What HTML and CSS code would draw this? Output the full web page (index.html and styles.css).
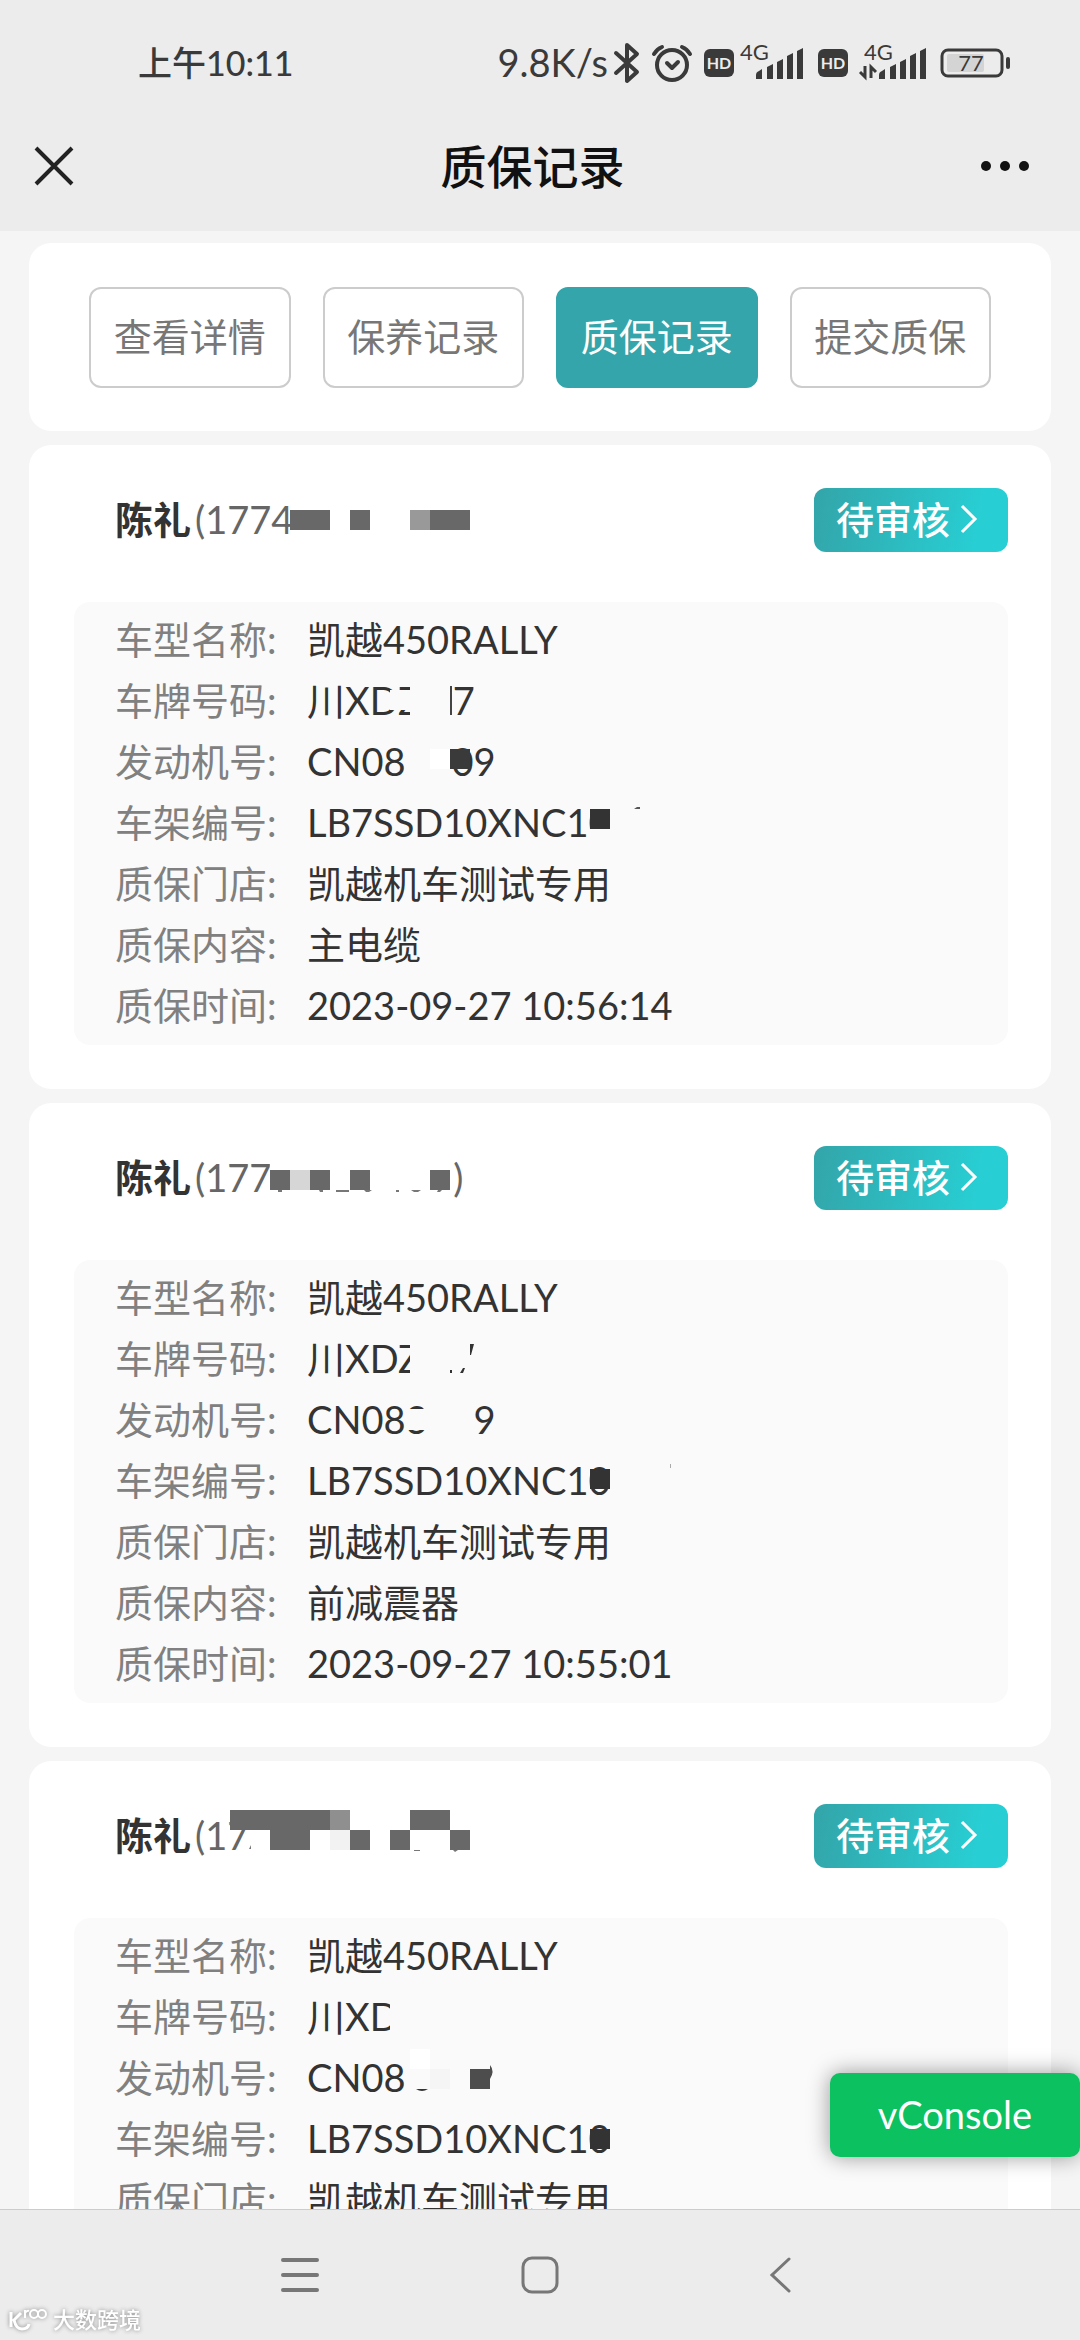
FILE: index.html
```html
<!DOCTYPE html>
<html lang="zh-CN">
<head>
<meta charset="utf-8">
<meta name="viewport" content="width=device-width">
<title>质保记录</title>
<link rel="stylesheet" href="styles.css">
</head>
<body>
<svg class="defs" aria-hidden="true">
  <symbol id="bars" viewBox="0 0 48 31"><path d="M0 31v-4q0-3 3-4l3-2v10zM11 31V19l6-3v15zM21 31V14l6-3v20zM31 31V8l6-3v26zM41 31V3l6-3v31z" fill="#3a3a3a"/></symbol>
  <symbol id="chevron" viewBox="0 0 18 30"><path d="M2 2l13 13L2 28" fill="none" stroke="#fff" stroke-width="3"/></symbol>
</svg>
<header class="top">
  <div class="status">
    <span class="clock">上午10:11</span>
    <span class="speed">9.8K/s</span>
    <div class="icons">
      <svg width="26" height="40" viewBox="0 0 26 40"><path d="M2 10l21 19-10 9V2l10 9L2 30" fill="none" stroke="#3a3a3a" stroke-width="4" stroke-linejoin="round" stroke-linecap="round"/></svg>
      <svg width="40" height="38" viewBox="0 0 40 38"><g fill="none" stroke="#3a3a3a" stroke-width="4" stroke-linecap="round" stroke-linejoin="round"><circle cx="20" cy="21" r="15"/><path d="M2 10q3-5 8-7M38 10q-3-5-8-7M15 19l5 5 6-6"/></g></svg>
      <span class="hd">HD</span>
      <svg class="signal" width="66" height="36" viewBox="0 0 66 36"><text x="0" y="15" font-size="22" fill="#3a3a3a">4G</text><use href="#bars" x="16" y="3" width="48" height="31"/></svg>
      <span class="hd">HD</span>
      <svg width="68" height="36" viewBox="0 0 68 36"><text x="4" y="15" font-size="22" fill="#3a3a3a">4G</text><path d="M5 21v11l-5-5M11 33V22l5 5" fill="none" stroke="#3a3a3a" stroke-width="3"/><use href="#bars" x="19" y="3" width="48" height="31"/></svg>
      <svg width="70" height="30" viewBox="0 0 70 30"><rect x="7" y="6" width="37" height="18" rx="2" fill="#d4d4d4"/><rect x="2" y="2" width="60" height="26" rx="6" fill="none" stroke="#3a3a3a" stroke-width="3"/><path d="M68 11v8" stroke="#3a3a3a" stroke-width="4" stroke-linecap="round"/><text x="31" y="23" text-anchor="middle" font-size="22" fill="#3a3a3a">77</text></svg>
    </div>
  </div>
  <div class="titlebar">
    <button class="icon-btn" aria-label="关闭"><svg width="38" height="38" viewBox="0 0 38 38"><path d="M1 1l36 36M37 1L1 37" stroke="#222" stroke-width="4"/></svg></button>
    <h1>质保记录</h1>
    <button class="icon-btn" aria-label="更多"><svg width="50" height="12" viewBox="0 0 50 12"><g fill="#111"><circle cx="6" cy="6" r="5"/><circle cx="25" cy="6" r="5"/><circle cx="44" cy="6" r="5"/></g></svg></button>
  </div>
</header>
<main>
  <div class="tabs">
    <button>查看详情</button>
    <button>保养记录</button>
    <button class="active">质保记录</button>
    <button>提交质保</button>
  </div>

  <article class="card">
    <div class="head">
      <div class="who"><b>陈礼</b><span>(17749</span>
        <svg class="mask" width="400" height="64"><path d="M175 0h225v64H175z" fill="#fff"/><path d="M175 22h40v20h-40zM235 22h20v20h-20zM315 22h40v20h-40z" fill="#686868"/><path d="M295 22h20v20h-20z" fill="#999"/></svg>
      </div>
      <button class="state">待审核<svg width="18" height="30"><use href="#chevron"/></svg></button>
    </div>
    <dl>
      <dt>车型名称:</dt><dd>凯越450RALLY</dd>
      <dt>车牌号码:</dt><dd>川XDZ<i class="gap short"></i>7
        <svg class="mask" width="400" height="61"><path d="M83 20h20v20H83zM103 0h40v61h-40z" fill="#fafafa"/><path d="M143 16h2v29h-2z" fill="#444"/></svg></dd>
      <dt>发动机号:</dt><dd>CN08<i class="gap"></i>09
        <svg class="mask" width="400" height="61"><path d="M123 18h20v20h-20z" fill="#fff"/><path d="M143 18h20v20h-20z" fill="#3a3a3a"/></svg></dd>
      <dt>车架编号:</dt><dd>LB7SSD10XNC10
        <svg class="mask" width="400" height="61"><path d="M283 0h40v61h-40z" fill="#fafafa"/><path d="M283 17h20v20h-20z" fill="#333"/><path d="M327 17l3-2h3v2z" fill="#555"/></svg></dd>
      <dt>质保门店:</dt><dd>凯越机车测试专用</dd>
      <dt>质保内容:</dt><dd>主电缆</dd>
      <dt>质保时间:</dt><dd>2023-09-27 10:56:14</dd>
    </dl>
  </article>

  <article class="card">
    <div class="head">
      <div class="who"><b>陈礼</b><span>(1774<i class="gap long"></i>)</span>
        <svg class="mask" width="400" height="64"><path d="M155 0h180v64H155z" fill="#fff"/><path d="M155 24h20v20h-20zM195 24h20v20h-20zM235 24h20v20h-20zM315 24h20v20h-20z" fill="#686868"/><path d="M175 24h20v20h-20z" fill="#d6d6d6"/><path d="M163 44h4v2h-4zM204 44h4v2h-3zM221 44h13v2h-13zM249 44h8l-3 2h-3zM281 44h3v2h-3zM296 44h10l-3 2h-4zM323 44h4l-2 2h-3z" fill="#777"/></svg>
      </div>
      <button class="state">待审核<svg width="18" height="30"><use href="#chevron"/></svg></button>
    </div>
    <dl>
      <dt>车型名称:</dt><dd>凯越450RALLY</dd>
      <dt>车牌号码:</dt><dd>川XDZ
        <svg class="mask" width="400" height="61"><path d="M103 0h40v61h-40z" fill="#fafafa"/><path d="M143 42h2v3h-2zM153 45l3-5h2l-2 5zM163 16h4l-3 11h-1z" fill="#333"/></svg></dd>
      <dt>发动机号:</dt><dd>CN083<i class="gap"></i>9
        <svg class="mask" width="400" height="61"><path d="M98 20h26v21H98zM123 0h20v61h-20z" fill="#fafafa"/></svg></dd>
      <dt>车架编号:</dt><dd>LB7SSD10XNC10
        <svg class="mask" width="400" height="61"><path d="M303 0h20v61h-20z" fill="#fafafa"/><path d="M283 19h20v20h-20z" fill="#333"/><path d="M363 14h1v4h-1z" fill="#aaa"/></svg></dd>
      <dt>质保门店:</dt><dd>凯越机车测试专用</dd>
      <dt>质保内容:</dt><dd>前减震器</dd>
      <dt>质保时间:</dt><dd>2023-09-27 10:55:01</dd>
    </dl>
  </article>

  <article class="card">
    <div class="head">
      <div class="who"><b>陈礼</b><span>(17</span>
        <svg class="mask" width="400" height="64"><path d="M115 6h100v20H115zM295 6h40v20h-40zM155 26h40v20h-40zM235 26h20v20h-20zM275 26h20v20h-20zM335 26h20v20h-20z" fill="#686868"/><path d="M215 6h20v20h-20z" fill="#8f8f8f"/><path d="M215 26h20v20h-20z" fill="#f2f2f2"/><path d="M134 45l2-4v4zM299 46h6v1h-6zM338 46h5l-3 2z" fill="#777"/></svg>
      </div>
      <button class="state">待审核<svg width="18" height="30"><use href="#chevron"/></svg></button>
    </div>
    <dl>
      <dt>车型名称:</dt><dd>凯越450RALLY</dd>
      <dt>车牌号码:</dt><dd>川XD
        <svg class="mask" width="400" height="61"><path d="M83 0h40v61H83z" fill="#fafafa"/></svg></dd>
      <dt>发动机号:</dt><dd>CN08
        <svg class="mask" width="400" height="61"><path d="M103 2h20v20h-20z" fill="#fff"/><path d="M123 22h20v20h-20z" fill="#f5f5f5"/><path d="M109 42h12q-6 4-12 0z" fill="#333"/><path d="M163 22h20v20h-20zM183 18q5 6 0 14z" fill="#4d4d4d"/></svg></dd>
      <dt>车架编号:</dt><dd>LB7SSD10XNC10
        <svg class="mask" width="400" height="61"><path d="M303 0h20v61h-20z" fill="#fafafa"/><path d="M283 21h20v20h-20z" fill="#333"/></svg></dd>
      <dt>质保门店:</dt><dd>凯越机车测试专用</dd>
    </dl>
  </article>
  <button class="vconsole">vConsole</button>
</main>
<nav>
  <button aria-label="菜单"><svg width="38" height="34" viewBox="0 0 38 34"><path d="M2 2h34M2 17h34M2 32h34" stroke="#777" stroke-width="4" stroke-linecap="round"/></svg></button>
  <button aria-label="主页"><svg width="38" height="38" viewBox="0 0 38 38"><rect x="2" y="2" width="34" height="34" rx="9" fill="none" stroke="#777" stroke-width="3"/></svg></button>
  <button aria-label="返回"><svg width="22" height="36" viewBox="0 0 22 36"><path d="M20 2L3 18l17 16" fill="none" stroke="#777" stroke-width="3" stroke-linecap="round"/></svg></button>
  <div class="watermark"><svg width="38" height="24" viewBox="0 0 38 24"><g fill="none" stroke="#fff" stroke-width="3"><path d="M2 4v15M4 13l8-8M5 12q2 9 8 9t7-5"/><path d="M16 2v8M16 5q2-3 4-2" stroke-width="2"/><circle cx="25" cy="6" r="4" stroke-width="2"/><circle cx="33" cy="6" r="4" stroke-width="2"/></g></svg>大数跨境</div>
</nav>
</body>
</html>
```

FILE: styles.css
```css
* { box-sizing: border-box; }
body {
  margin: 0;
  height: 100vh;
  display: flex;
  flex-direction: column;
  background: #f5f5f5;
  color: #333;
  font: 38px/61px Lato, "Noto Sans CJK SC", sans-serif;
}
button {
  margin: 0;
  padding: 0;
  border: 0;
  background: none;
  color: inherit;
  font: inherit;
}
svg { flex: none; overflow: visible; }
.defs { position: absolute; width: 0; height: 0; }

.top { background: #ececec; }
.status {
  display: flex;
  align-items: center;
  padding: 32px 70px 0 138px;
  color: #3a3a3a;
}
.clock { font-size: 34px; font-weight: 500; margin-right: auto; }
.speed { margin-right: 6px; }
.icons { display: flex; align-items: center; gap: 12px; }
.signal { margin-left: -6px; }
.hd {
  width: 30px;
  border-radius: 6px;
  background: #3a3a3a;
  color: #ececec;
  font-size: 16px;
  font-weight: 700;
  line-height: 28px;
  text-align: center;
}
.titlebar {
  display: flex;
  align-items: center;
  justify-content: space-between;
  height: 138px;
  padding: 8px 50px 0 35px;
}
.titlebar h1 {
  margin: 0;
  color: #111;
  font-size: 46px;
  font-weight: 500;
}
.icon-btn { display: flex; width: 50px; }

main {
  position: relative;
  flex: 1;
  min-height: 0;
  overflow: hidden;
  padding: 12px 29px 0;
  display: flex;
  flex-direction: column;
  gap: 14px;
}
.tabs, .card {
  flex: none;
  background: #fff;
  border-radius: 22px;
}
.tabs {
  display: grid;
  grid-template-columns: repeat(4, 1fr);
  gap: 32px;
  padding: 44px 60px 43px;
}
.tabs button {
  height: 101px;
  padding-bottom: 2px;
  border: 2px solid #ccc;
  border-radius: 12px;
  color: #777;
}
.tabs .active {
  border-color: #34a5aa;
  background: #34a5aa;
  color: #fff;
}

.card { padding: 43px 43px 44px 45px; }
.head {
  display: flex;
  justify-content: space-between;
  margin-bottom: 50px;
}
.who {
  position: relative;
  padding-left: 41px;
  line-height: 62px;
  white-space: nowrap;
}
.who b { margin-right: 4px; }
.who span { color: #666; }
.state {
  display: flex;
  align-items: center;
  gap: 10px;
  width: 194px;
  height: 64px;
  padding: 0 0 2px 22px;
  border-radius: 12px;
  background: linear-gradient(100deg, #33a5a9, #27cfd4 85%);
  color: #fff;
  font-weight: 500;
}
dl {
  display: grid;
  grid-template-columns: 192px 1fr;
  margin: 0;
  padding: 7px 41px 9px;
  border-radius: 16px;
  background: #fafafa;
}
dt { color: #808080; }
dd { position: relative; margin: 0; white-space: nowrap; }
.gap { display: inline-block; width: 46px; }
.gap.short { width: 32px; }
.gap.long { width: 160px; }
.mask { position: absolute; left: 0; top: 0; }
.who .mask { left: 41px; }

.vconsole {
  position: absolute;
  right: 0;
  bottom: 52px;
  padding: 11px 48px 12px;
  border-radius: 10px;
  background: #0bc160;
  box-shadow: 0 0 22px rgba(0, 0, 0, .4);
  color: #fff;
}

nav {
  position: relative;
  display: flex;
  justify-content: center;
  gap: 160px;
  height: 131px;
  border-top: 1px solid #ccc;
  background: #ececec;
}
nav button {
  display: flex;
  align-items: center;
  justify-content: center;
  width: 80px;
}
.watermark {
  position: absolute;
  left: 9px;
  bottom: 4px;
  display: flex;
  align-items: center;
  gap: 6px;
  color: #fff;
  font-size: 22px;
  line-height: 32px;
  font-weight: 500;
  filter: drop-shadow(0 0 2px #888);
}
```
